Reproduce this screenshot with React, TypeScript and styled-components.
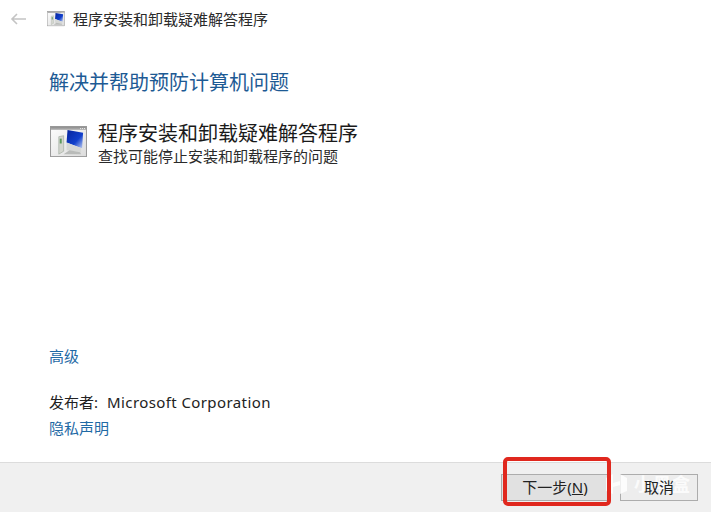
import styled, { createGlobalStyle } from "styled-components";

const GlobalStyle = createGlobalStyle`
  html, body {
    margin: 0;
    padding: 0;
    background: #ffffff;
  }
  body {
    font-family: "Noto Sans", "Noto Sans CJK SC", sans-serif;
  }
`;

const Window = styled.div`
  position: relative;
  display: flex;
  flex-direction: column;
  width: 711px;
  height: 512px;
  overflow: hidden;
  background: #ffffff;
  color: #1a1a1a;
`;

const TitleBar = styled.div`
  display: flex;
  align-items: center;
  height: 38px;
  padding-left: 10px;
`;

const BackArrow = styled.svg`
  flex: none;
  width: 17px;
  height: 12px;
  margin-right: 20px;
`;

const TitleText = styled.span`
  margin-left: 8px;
  font-size: 15px;
  line-height: 20px;
  color: #2a2a2a;
`;

const Content = styled.div`
  display: flex;
  flex: 1;
  flex-direction: column;
  padding: 29px 0 0 49px;
`;

const Heading = styled.h1`
  margin: 0;
  font-size: 20px;
  font-weight: 400;
  line-height: 32px;
  color: #1d5a94;
`;

const Task = styled.div`
  display: flex;
  align-items: flex-start;
  margin-top: 22px;
`;

const TaskIcon = styled.div`
  flex: none;
  margin: 5px 11px 0 1px;
  width: 38px;
  line-height: 0;
`;

const TaskText = styled.div`
  display: flex;
  flex-direction: column;
  margin-left: -1px;
`;

const TaskTitle = styled.div`
  font-size: 20px;
  line-height: 25px;
  color: #1a1a1a;
`;

const TaskNote = styled.div`
  font-size: 15px;
  line-height: 20px;
  color: #2a2a2a;
`;

const Links = styled.div`
  display: flex;
  flex-direction: column;
  margin-top: auto;
  padding-bottom: 24px;
`;

const Link = styled.a<{ $gap?: number }>`
  margin-top: ${(p) => p.$gap ?? 0}px;
  font-size: 15px;
  line-height: 20px;
  color: #1f6aa5;
`;

const Publisher = styled.div`
  margin-top: 26px;
  font-size: 15px;
  line-height: 20px;
  color: #222222;
`;

const PublisherName = styled.span`
  margin-left: 9px;
  letter-spacing: 0.4px;
`;

const Footer = styled.div`
  display: flex;
  justify-content: flex-end;
  align-items: flex-start;
  gap: 11px;
  height: 50px;
  padding: 11px 13px 0 0;
  box-sizing: border-box;
  background: #f0f0f0;
  border-top: 1px solid #dcdcdc;
`;

const Button = styled.button<{ $width: number; $active?: boolean }>`
  width: ${(p) => p.$width}px;
  height: 27px;
  padding: 0 0 1px;
  font-family: inherit;
  font-size: 15px;
  line-height: 20px;
  color: #222222;
  background: ${(p) => (p.$active ? "#e1e1e1" : "#ededed")};
  border: 1px solid #acacac;
`;

// the caption stays readable through the watermark lying over the footer
const ButtonLabel = styled.span`
  position: relative;
  z-index: 2;
`;

const Accel = styled.span`
  text-decoration: underline;
`;

const Highlight = styled.div`
  position: absolute;
  z-index: 3;
  left: 503px;
  top: 457px;
  width: 108px;
  height: 49px;
  box-sizing: border-box;
  border: 4px solid #e0281e;
  border-radius: 5px;
`;

const Watermark = styled.div`
  position: absolute;
  z-index: 1;
  left: 605px;
  top: 472px;
  display: flex;
  align-items: center;
  gap: 6px;
  color: rgba(255, 255, 255, 0.8);
`;

const WatermarkText = styled.span`
  font-size: 18px;
  font-weight: 700;
  line-height: 24px;
  letter-spacing: 1px;
`;

const MonitorIcon = ({ size }: { size: number }) => (
  <svg width={size} height={size * 0.84} viewBox="0 0 38 32">
    <defs>
      <linearGradient id="bar" x1="0" y1="0" x2="0" y2="1">
        <stop offset="0" stopColor="#8d8d8d" />
        <stop offset="1" stopColor="#b5b5b5" />
      </linearGradient>
      <linearGradient id="body" x1="0" y1="0" x2="1" y2="1">
        <stop offset="0" stopColor="#fdfdfd" />
        <stop offset="1" stopColor="#dcdcdc" />
      </linearGradient>
      <linearGradient id="screen" x1="0" y1="0" x2="1" y2="1">
        <stop offset="0" stopColor="#06249c" />
        <stop offset="0.6" stopColor="#1240cc" />
        <stop offset="1" stopColor="#c2d0f0" />
      </linearGradient>
    </defs>
    <rect x="0.5" y="0.5" width="37" height="31" fill="url(#body)" stroke="#969696" />
    <rect x="1" y="1" width="36" height="3" fill="url(#bar)" />
    <path d="M31 2h1v1h-1zM33 2h1v1h-1zM35 2h1v1h-1z" fill="#eeeeee" />
    <path d="M9 11l5-1v16l-5 3z" fill="#d4d6cf" stroke="#9aa59a" strokeWidth="0.6" />
    <rect x="10" y="13" width="2" height="5" fill="#5c9a5c" />
    <path d="M18 4l16 3-1 16-16-6z" fill="url(#screen)" />
    <path d="M17 17v8l15 2v-4z" fill="#d6d8d6" />
    <path d="M14 29l6-4 11 2 1 2z" fill="#b9bbb9" />
  </svg>
);

const App = () => (
  <Window>
    <GlobalStyle />
    <TitleBar>
      <BackArrow viewBox="0 0 17 12">
        <path d="M16 6H2M7 1L2 6l5 5" fill="none" stroke="#c4c4c4" strokeWidth="1.6" />
      </BackArrow>
      <MonitorIcon size={18} />
      <TitleText>程序安装和卸载疑难解答程序</TitleText>
    </TitleBar>
    <Content>
      <Heading>解决并帮助预防计算机问题</Heading>
      <Task>
        <TaskIcon>
          <MonitorIcon size={37} />
        </TaskIcon>
        <TaskText>
          <TaskTitle>程序安装和卸载疑难解答程序</TaskTitle>
          <TaskNote>查找可能停止安装和卸载程序的问题</TaskNote>
        </TaskText>
      </Task>
      <Links>
        <Link>高级</Link>
        <Publisher>
          发布者:<PublisherName>Microsoft Corporation</PublisherName>
        </Publisher>
        <Link $gap={6}>隐私声明</Link>
      </Links>
    </Content>
    <Footer>
      <Button $width={108} $active>
        <ButtonLabel>
          下一步(<Accel>N</Accel>)
        </ButtonLabel>
      </Button>
      <Button $width={78}>
        <ButtonLabel>取消</ButtonLabel>
      </Button>
    </Footer>
    <Watermark>
      <svg width="23" height="22" viewBox="0 0 23 22">
        <path d="M1 5l7-4v20l-7-3zM22 5l-7-4v20l7-3zM8 10l7-2v4l-7 2z" fill="currentColor" />
      </svg>
      <WatermarkText>小黑盒</WatermarkText>
    </Watermark>
    <Highlight />
  </Window>
);

export default App;
